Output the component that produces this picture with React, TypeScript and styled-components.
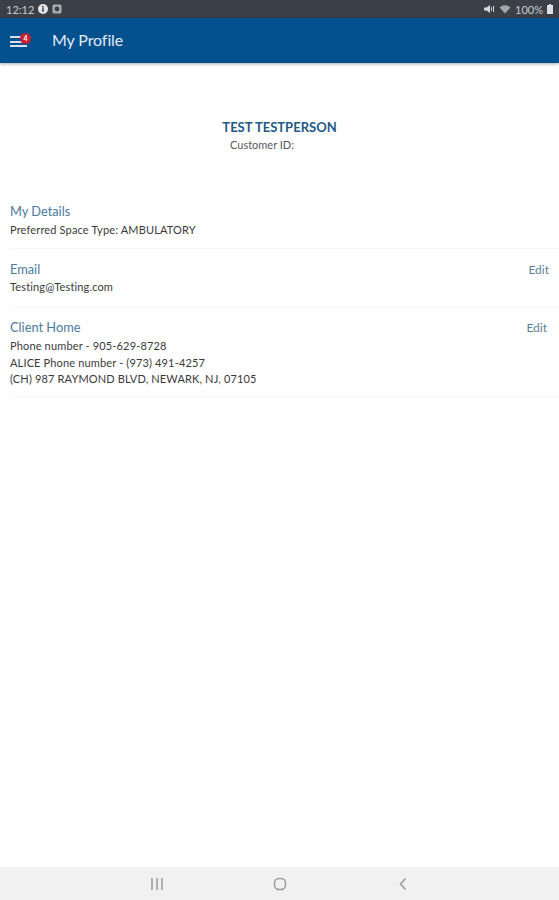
import React from "react"
import styled, { createGlobalStyle } from "styled-components";

const GlobalStyle = createGlobalStyle`
  html, body {
    margin: 0;
    padding: 0;
    background: #ffffff;
    font-family: "Lato", "Open Sans", sans-serif;
  }
`

const Page = styled.div`
  width: 559px;
  height: 900px;
  display: flex;
  flex-direction: column;
  overflow: hidden;
  background: #ffffff;
`

const StatusBar = styled.div`
  height: 18px;
  flex: none;
  background: #3b4048;
  color: #c9ccd0;
  font-size: 11px;
  display: flex;
  align-items: center;
  justify-content: space-between;
  padding: 0 6px 0 6px;
`

const StatusGroup = styled.div`
  display: flex;
  align-items: center;
  gap: 4px;
`

const Header = styled.div`
  height: 45px;
  flex: none;
  box-sizing: border-box;
  background: #03508f;
  box-shadow: 0 1px 3px rgba(0, 0, 0, 0.35);
  display: flex;
  align-items: center;
  padding: 0 0 3px 10px;
`

const MenuButton = styled.div`
  position: relative;
  width: 20px;
  height: 14px;
  margin-right: 22px;
`

const MenuLine = styled.div<{ $top: number; $width: number }>`
  position: absolute;
  left: 0;
  top: ${p => p.$top}px;
  width: ${p => p.$width}px;
  height: 2px;
  background: #d5e1ec;
`

const Badge = styled.div`
  position: absolute;
  left: 10px;
  top: 1px;
  width: 11px;
  height: 11px;
  border-radius: 50%;
  background: #c9202f;
  color: #ffffff;
  font-size: 7px;
  font-weight: 700;
  line-height: 11px;
  text-align: center;
`

const Title = styled.div`
  color: #e0eaf3;
  font-size: 16px;
  letter-spacing: -0.1px;
`

const Content = styled.div`
  flex: 1;
  display: flex;
  flex-direction: column;
`

const ProfileHead = styled.div`
  padding-top: 55px;
  height: 126px;
  box-sizing: border-box;
  display: flex;
  flex-direction: column;
  align-items: center;
`

const Name = styled.div`
  color: #1f5a86;
  font-size: 13px;
  font-weight: 700;
  line-height: 18px;
`

const CustomerId = styled.div`
  color: #55595c;
  font-size: 11px;
  line-height: 18px;
  margin-right: 35px;
`

const Section = styled.div<{ $height: number; $pad: number }>`
  height: ${p => p.$height}px;
  box-sizing: border-box;
  margin-left: 10px;
  padding: ${p => p.$pad}px 10px 0 0;
  border-bottom: 1px solid #f6f6f6;
`

const SectionTop = styled.div`
  display: flex;
  justify-content: space-between;
  align-items: center;
  height: 18px;
  margin-bottom: 1px;
`

const SectionTitle = styled.div`
  color: #4a7a9e;
  font-size: 12.8px;
`

const EditLink = styled.div<{ $inset?: number }>`
  color: #5a8099;
  font-size: 12px;
  margin-right: ${p => p.$inset ?? 0}px;
`

const Line = styled.div<{ $height?: number }>`
  color: #3a3a3a;
  font-size: 11px;
  letter-spacing: 0.15px;
  line-height: ${p => p.$height ?? 17}px;
`

const NavBar = styled.div`
  height: 33px;
  flex: none;
  background: #f1f1f1;
  display: flex;
  align-items: center;
  justify-content: center;
  gap: 109px;
`

const Info = () => (
    <svg width="10" height="10" viewBox="0 0 10 10">
        <circle cx="5" cy="5" r="5" fill="#e4e5e7"/>
        <rect x="4.2" y="4.2" width="1.6" height="3.6" fill="#3b4048"/>
        <rect x="4.2" y="2" width="1.6" height="1.5" fill="#3b4048"/>
    </svg>
)

const Photo = () => (
    <svg width="10" height="10" viewBox="0 0 10 10">
        <rect x="0.5" y="0.5" width="9" height="9" rx="1.5" fill="#a9adb2"/>
        <circle cx="5" cy="5" r="2.4" fill="#3b4048"/>
    </svg>
)

const Mute = () => (
    <svg width="11" height="10" viewBox="0 0 11 10">
        <path d="M0 3.5h2.5L6 1v8L2.5 6.500H0z" fill="#d5d7da"/>
        <path d="M7.5 3.200v3.600M9.500 2v6" stroke="#d5d7da" strokeWidth="1"/>
    </svg>
)

const Wifi = () => (
    <svg width="12" height="10" viewBox="0 0 12 10">
        <path d="M0.500 3.500a8 8 0 0 1 11 0L6 9.500z" fill="#a4a8ad"/>
    </svg>
)

const Battery = () => (
    <svg width="6" height="10" viewBox="0 0 6 10">
        <path d="M2 0h2v1h2v9H0V1h2z" fill="#dcdee0"/>
    </svg>
)

const Recents = () => (
    <svg width="14" height="14" viewBox="0 0 14 14">
        <path d="M2 1v12M7 1v12M12 1v12" stroke="#999999" strokeWidth="1.500"/>
    </svg>
)

const Home = () => (
    <svg width="14" height="14" viewBox="0 0 14 14">
        <rect x="1.500" y="1.500" width="11" height="11" rx="4.500" fill="none" stroke="#999999" strokeWidth="1.500"/>
    </svg>
)

const Back = () => (
    <svg width="14" height="14" viewBox="0 0 14 14">
        <path d="M9.500 1.500L4.500 7l5 5.500" fill="none" stroke="#999999" strokeWidth="1.500"/>
    </svg>
)

const App = () => {
    return (
        <>
            <GlobalStyle/>
            <Page>
                <StatusBar>
                    <StatusGroup>
                        <span>12:12</span>
                        <Info/>
                        <Photo/>
                    </StatusGroup>
                    <StatusGroup>
                        <Mute/>
                        <Wifi/>
                        <span>100%</span>
                        <Battery/>
                    </StatusGroup>
                </StatusBar>
                <Header>
                    <MenuButton>
                        <MenuLine $top={4} $width={11}/>
                        <MenuLine $top={9} $width={13}/>
                        <MenuLine $top={13} $width={17}/>
                        <Badge>4</Badge>
                    </MenuButton>
                    <Title>My Profile</Title>
                </Header>
                <Content>
                    <ProfileHead>
                        <Name>TEST TESTPERSON</Name>
                        <CustomerId>Customer ID:</CustomerId>
                    </ProfileHead>
                    <Section $height={60} $pad={13}>
                        <SectionTop>
                            <SectionTitle>My Details</SectionTitle>
                        </SectionTop>
                        <Line $height={17}>Preferred Space Type: AMBULATORY</Line>
                    </Section>
                    <Section $height={59} $pad={11}>
                        <SectionTop>
                            <SectionTitle>Email</SectionTitle>
                            <EditLink>Edit</EditLink>
                        </SectionTop>
                        <Line $height={15}>Testing@Testing.com</Line>
                    </Section>
                    <Section $height={89} $pad={10}>
                        <SectionTop>
                            <SectionTitle>Client Home</SectionTitle>
                            <EditLink $inset={2}>Edit</EditLink>
                        </SectionTop>
                        <Line $height={18}>Phone number - 905-629-8728</Line>
                        <Line $height={16}>ALICE Phone number - (973) 491-4257</Line>
                        <Line $height={16}>(CH) 987 RAYMOND BLVD, NEWARK, NJ, 07105</Line>
                    </Section>
                </Content>
                <NavBar>
                    <Recents/>
                    <Home/>
                    <Back/>
                </NavBar>
            </Page>
        </>
    )
}

export default App
